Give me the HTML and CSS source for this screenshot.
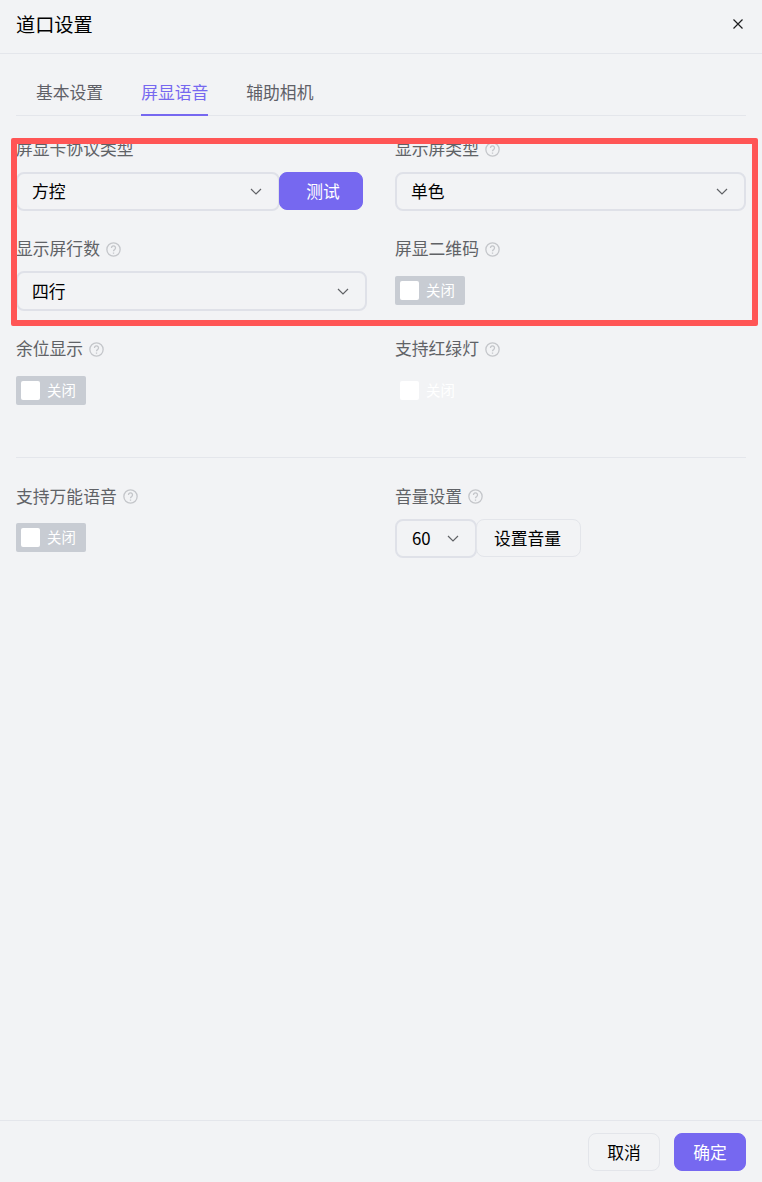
FILE: index.html
```html
<!DOCTYPE html>
<html lang="zh-CN">

<head>
  <meta name="viewport" content="width=device-width, initial-scale=1.0" />
  <title>道口设置</title>
  <link rel="stylesheet" href="styles.css">
</head>

<body>
  <div class="dialog">
    <div class="dialog-header">
      <span class="dialog-title">道口设置</span>
      <svg class="close-icon" viewBox="0 0 10 10"><path d="M.5.5l9 9M9.5.5l-9 9" /></svg>
    </div>

    <div class="dialog-body">
      <div class="tabs">
        <span class="tab">基本设置</span>
        <span class="tab active">屏显语音</span>
        <span class="tab">辅助相机</span>
      </div>

      <div class="form-grid">
        <div class="form-item">
          <div class="label">屏显卡协议类型</div>
          <div class="control-row">
            <div class="select grow">方控<svg class="chevron" viewBox="0 0 12 7"><path d="M1 1l5 5 5-5" /></svg></div>
            <button class="btn primary test-btn">测试</button>
          </div>
        </div>
        <div class="form-item">
          <div class="label">显示屏类型
            <svg class="help" viewBox="0 0 14 14"><circle cx="7" cy="7" r="6.2" /><path d="M5.1 5.5a1.9 1.9 0 1 1 2.9 1.6c-.7.4-1 .8-1 1.6M7 9.9v1" /></svg>
          </div>
          <div class="control-row">
            <div class="select grow">单色<svg class="chevron" viewBox="0 0 12 7"><path d="M1 1l5 5 5-5" /></svg></div>
          </div>
        </div>
        <div class="form-item second-row">
          <div class="label">显示屏行数
            <svg class="help" viewBox="0 0 14 14"><circle cx="7" cy="7" r="6.2" /><path d="M5.1 5.5a1.9 1.9 0 1 1 2.9 1.6c-.7.4-1 .8-1 1.6M7 9.9v1" /></svg>
          </div>
          <div class="control-row">
            <div class="select grow">四行<svg class="chevron" viewBox="0 0 12 7"><path d="M1 1l5 5 5-5" /></svg></div>
          </div>
        </div>
        <div class="form-item">
          <div class="label">屏显二维码
            <svg class="help" viewBox="0 0 14 14"><circle cx="7" cy="7" r="6.2" /><path d="M5.1 5.5a1.9 1.9 0 1 1 2.9 1.6c-.7.4-1 .8-1 1.6M7 9.9v1" /></svg>
          </div>
          <div class="switch"><span class="knob"></span>关闭</div>
        </div>
        <div class="form-item">
          <div class="label">余位显示
            <svg class="help" viewBox="0 0 14 14"><circle cx="7" cy="7" r="6.2" /><path d="M5.1 5.5a1.9 1.9 0 1 1 2.9 1.6c-.7.4-1 .8-1 1.6M7 9.9v1" /></svg>
          </div>
          <div class="switch"><span class="knob"></span>关闭</div>
        </div>
        <div class="form-item">
          <div class="label">支持红绿灯
            <svg class="help" viewBox="0 0 14 14"><circle cx="7" cy="7" r="6.2" /><path d="M5.1 5.5a1.9 1.9 0 1 1 2.9 1.6c-.7.4-1 .8-1 1.6M7 9.9v1" /></svg>
          </div>
          <div class="switch ghost"><span class="knob"></span>关闭</div>
        </div>
      </div>

      <div class="divider"></div>

      <div class="form-grid lower">
        <div class="form-item">
          <div class="label">支持万能语音
            <svg class="help" viewBox="0 0 14 14"><circle cx="7" cy="7" r="6.2" /><path d="M5.1 5.5a1.9 1.9 0 1 1 2.9 1.6c-.7.4-1 .8-1 1.6M7 9.9v1" /></svg>
          </div>
          <div class="switch"><span class="knob"></span>关闭</div>
        </div>
        <div class="form-item">
          <div class="label">音量设置
            <svg class="help" viewBox="0 0 14 14"><circle cx="7" cy="7" r="6.2" /><path d="M5.1 5.5a1.9 1.9 0 1 1 2.9 1.6c-.7.4-1 .8-1 1.6M7 9.9v1" /></svg>
          </div>
          <div class="control-row">
            <div class="select volume">60<svg class="chevron" viewBox="0 0 12 7"><path d="M1 1l5 5 5-5" /></svg></div>
            <button class="btn volume-btn">设置音量</button>
          </div>
        </div>
      </div>
    </div>

    <div class="dialog-footer">
      <button class="btn footer-btn">取消</button>
      <button class="btn primary footer-btn">确定</button>
    </div>
  </div>

  <div class="highlight"></div>
</body>

</html>
```
FILE: styles.css
```css
* {
  padding: 0;
  margin: 0;
  box-sizing: border-box;
}

body {
  background-color: #f2f3f5;
  color: #000;
  font-family: "Noto Sans CJK SC", "Liberation Sans", sans-serif;
  font-size: 16.8px;
}

.dialog {
  height: 1182px;
  display: flex;
  flex-direction: column;
}

.dialog-header {
  height: 54px;
  padding: 0 19px 5px 16px;
  display: flex;
  align-items: center;
  justify-content: space-between;
  border-bottom: 1px solid #e4e6eb;
}

.dialog-title {
  font-size: 19.2px;
  margin-bottom: 1px;
}

.close-icon {
  width: 10px;
  height: 10px;
  fill: none;
  stroke: #1d1d1f;
  stroke-width: 1.2;
}

.dialog-body {
  flex: 1;
  padding: 0 16px;
}

.tabs {
  height: 62px;
  padding: 0 20px;
  display: flex;
  gap: 38px;
  border-bottom: 1px solid #e4e6eb;
}

.tab {
  height: 62px;
  line-height: 77px;
  color: #5f6067;
  white-space: nowrap;
}

.tab.active {
  color: #7668f0;
  border-bottom: 2px solid #7668f0;
}

.form-grid {
  display: grid;
  grid-template-columns: 351px 351px;
  column-gap: 28px;
  padding-top: 23px;
}

.form-grid.lower {
  padding-top: 28px;
}

.form-item {
  height: 100px;
}

.label {
  height: 20px;
  padding-bottom: 2px;
  color: #606266;
  display: flex;
  align-items: center;
  gap: 6px;
}

.help {
  width: 15px;
  height: 15px;
  margin-top: 2px;
  fill: none;
  stroke: #c4c6ca;
  stroke-width: 1.2;
}

.lower .label {
  padding-bottom: 0;
}

.lower .help {
  margin-top: 0;
}

.control-row {
  margin-top: 13px;
  display: flex;
}

.second-row .control-row {
  margin-top: 12px;
}

.select {
  height: 39px;
  padding: 0 16px 2px 14px;
  display: flex;
  align-items: center;
  justify-content: space-between;
  border: 2px solid #dfe1e8;
  border-radius: 8px;
}

.second-row .select {
  height: 40px;
  padding-bottom: 0;
}

.select.grow {
  flex: 1;
}

.select.volume {
  width: 82px;
  padding-left: 15px;
}

.chevron {
  width: 12px;
  height: 7px;
  margin-top: 2px;
  fill: none;
  stroke: #606266;
  stroke-width: 1.2;
}

.second-row .chevron {
  margin-top: 0;
}

.btn {
  height: 38px;
  border: 1px solid #e3e5ea;
  border-radius: 8px;
  background-color: transparent;
  color: #000;
  font-family: inherit;
  font-size: 16.8px;
}

.btn.primary {
  background-color: #7668f0;
  border-color: #7668f0;
  color: #fff;
}

.test-btn {
  width: 84px;
  margin-left: -1px;
  margin-right: 4px;
  padding-left: 4px;
}

.volume-btn {
  width: 105px;
  margin-left: -1px;
  padding-right: 2px;
}

.switch {
  width: 70px;
  height: 29px;
  margin-top: 17px;
  padding: 0 0 2px 5px;
  display: flex;
  align-items: center;
  gap: 7px;
  border-radius: 2px;
  background-color: #c8ccd3;
  color: #fff;
  font-size: 14.4px;
}

.switch.ghost {
  background-color: transparent;
}

.knob {
  width: 19px;
  height: 19px;
  margin-top: 2px;
  border-radius: 2px;
  background-color: #fff;
}

.divider {
  height: 1px;
  margin-top: 18px;
  background-color: #e4e6eb;
}

.dialog-footer {
  height: 62px;
  padding: 12px 16px 0;
  display: flex;
  justify-content: flex-end;
  gap: 14px;
  border-top: 1px solid #e4e6eb;
}

.footer-btn {
  width: 72px;
}

/* red box drawn over the form */
.highlight {
  position: absolute;
  left: 11px;
  top: 138px;
  width: 747px;
  height: 188px;
  border: 6px solid #ff5555;
  border-radius: 2px;
}
```
